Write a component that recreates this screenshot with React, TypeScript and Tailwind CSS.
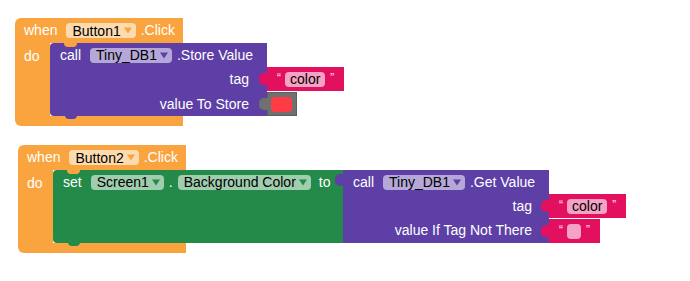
import React from 'react';

type Tone = 'orange' | 'purple' | 'green';

const arrowFill: Record<Tone, string> = {
  orange: '#f9a43f',
  purple: '#5d3fa6',
  green: '#238a49',
};

function Dropdown({ label, tone }: { label: string; tone: Tone }) {
  const bg =
    tone === 'orange' ? 'bg-[#fddbb1]' : tone === 'purple' ? 'bg-[#b5a8d8]' : 'bg-[#9fcdae]';
  return (
    <span
      className={`flex h-[15px] items-center gap-[3px] rounded-[4px] pl-[6px] pr-[4px] leading-none text-black ${bg}`}
    >
      {label}
      <svg width="8" height="7" viewBox="0 0 8 7">
        <path d="M0 0.5h8L4 6.5z" fill={arrowFill[tone]} />
      </svg>
    </span>
  );
}

// little puzzle plug on the left of a value block
function Plug({ color, top }: { color: string; top: string }) {
  return <span className={`absolute -left-[8px] h-[12px] w-[9px] rounded-l-[5px] ${color} ${top}`} />;
}

function TextBlock({ value }: { value?: string }) {
  return (
    <div className="relative flex h-[24px] items-center bg-[#e3105f] pl-[10px] pr-[10px]">
      <Plug color="bg-[#e3105f]" top="top-[6px]" />
      <span className="-mt-[3px] text-[12px] leading-none text-[#fde0ea]">“</span>
      {value ? (
        <span className="ml-[4px] flex h-[15px] items-center rounded-[4px] bg-[#f5a3c4] px-[5px] leading-none text-black">
          {value}
        </span>
      ) : (
        <span className="ml-[4px] h-[15px] w-[14px] rounded-[4px] bg-[#f5a3c4]" />
      )}
      <span className="-mt-[3px] ml-[5px] text-[12px] leading-none text-[#fde0ea]">”</span>
    </div>
  );
}

function ColorBlock() {
  return (
    <div className="relative flex h-[24px] w-[30px] items-center border border-[#5e5e5e] bg-[#707070] pl-[3px]">
      <span className="absolute -left-[9px] top-[5px] h-[12px] w-[9px] rounded-l-[5px] bg-[#707070]" />
      <span className="h-[15px] w-[21px] rounded-[4px] bg-[#ff3b46]" />
    </div>
  );
}

function Notches({ color }: { color: string }) {
  return (
    <>
      <span className="absolute left-[14px] top-0 h-[4px] w-[13px] rounded-b-full bg-[#f9a43f]" />
      <span className={`absolute -bottom-[3px] left-[15px] h-[4px] w-[12px] rounded-b-full ${color}`} />
    </>
  );
}

function EventBlock({ component, children }: { component: string; children: React.ReactNode }) {
  return (
    <div className="flex flex-col text-white">
      <div className="flex h-[25px] w-[168px] items-center rounded-tl-[6px] bg-[#f9a43f] pl-[9px]">
        <span>when</span>
        <span className="ml-[9px]">
          <Dropdown label={component} tone="orange" />
        </span>
        <span className="ml-[5px]">.Click</span>
      </div>
      <div className="flex">
        <div className="w-[35px] bg-[#f9a43f] pl-[9px] pt-[3px]">do</div>
        {children}
      </div>
      <div className="h-[10px] w-[168px] rounded-bl-[6px] bg-[#f9a43f]" />
    </div>
  );
}

function StoreValue() {
  return (
    <div className="flex">
      <div className="relative flex w-[217px] flex-col rounded-l-[4px] bg-[#5d3fa6]">
        <Notches color="bg-[#5d3fa6]" />
        <div className="flex h-[24px] items-center pl-[10px]">
          <span>call</span>
          <span className="ml-[9px]">
            <Dropdown label="Tiny_DB1" tone="purple" />
          </span>
          <span className="ml-[5px]">.Store Value</span>
        </div>
        <div className="flex h-[25px] items-center justify-end pr-[18px]">tag</div>
        <div className="flex h-[24px] items-center justify-end pr-[18px]">value To Store</div>
      </div>
      <div className="flex flex-col items-start pt-[24px]">
        <div className="h-[25px]">
          <TextBlock value="color" />
        </div>
        <ColorBlock />
      </div>
    </div>
  );
}

function GetValue() {
  return (
    <div className="flex">
      <div className="relative flex w-[206px] flex-col bg-[#5d3fa6]">
        <Plug color="bg-[#5d3fa6]" top="top-[4px]" />
        <div className="flex h-[24px] items-center pl-[10px]">
          <span>call</span>
          <span className="ml-[9px]">
            <Dropdown label="Tiny_DB1" tone="purple" />
          </span>
          <span className="ml-[5px]">.Get Value</span>
        </div>
        <div className="flex h-[24px] items-center justify-end pr-[17px]">tag</div>
        <div className="flex h-[25px] items-center justify-end pr-[17px]">value If Tag Not There</div>
      </div>
      <div className="flex flex-col items-start pt-[24px]">
        <div className="h-[25px]">
          <TextBlock value="color" />
        </div>
        <TextBlock />
      </div>
    </div>
  );
}

function SetBackground() {
  return (
    <div className="flex">
      <div className="relative flex w-[290px] items-start rounded-l-[4px] bg-[#238a49]">
        <Notches color="bg-[#238a49]" />
        <div className="flex h-[24px] items-center pl-[10px]">
          <span>set</span>
          <span className="ml-[9px]">
            <Dropdown label="Screen1" tone="green" />
          </span>
          <span className="ml-[5px]">.</span>
          <span className="ml-[5px]">
            <Dropdown label="Background Color" tone="green" />
          </span>
          <span className="ml-[8px]">to</span>
        </div>
      </div>
      <GetValue />
    </div>
  );
}

export default function App() {
  return (
    <div className="relative h-[281px] w-[690px] overflow-hidden bg-white font-['Liberation_Sans',Arial,sans-serif] text-[14px]">
      <div className="absolute left-[15px] top-[18px]">
        <EventBlock component="Button1">
          <StoreValue />
        </EventBlock>
      </div>
      <div className="absolute left-[18px] top-[145px]">
        <EventBlock component="Button2">
          <SetBackground />
        </EventBlock>
      </div>
    </div>
  );
}
